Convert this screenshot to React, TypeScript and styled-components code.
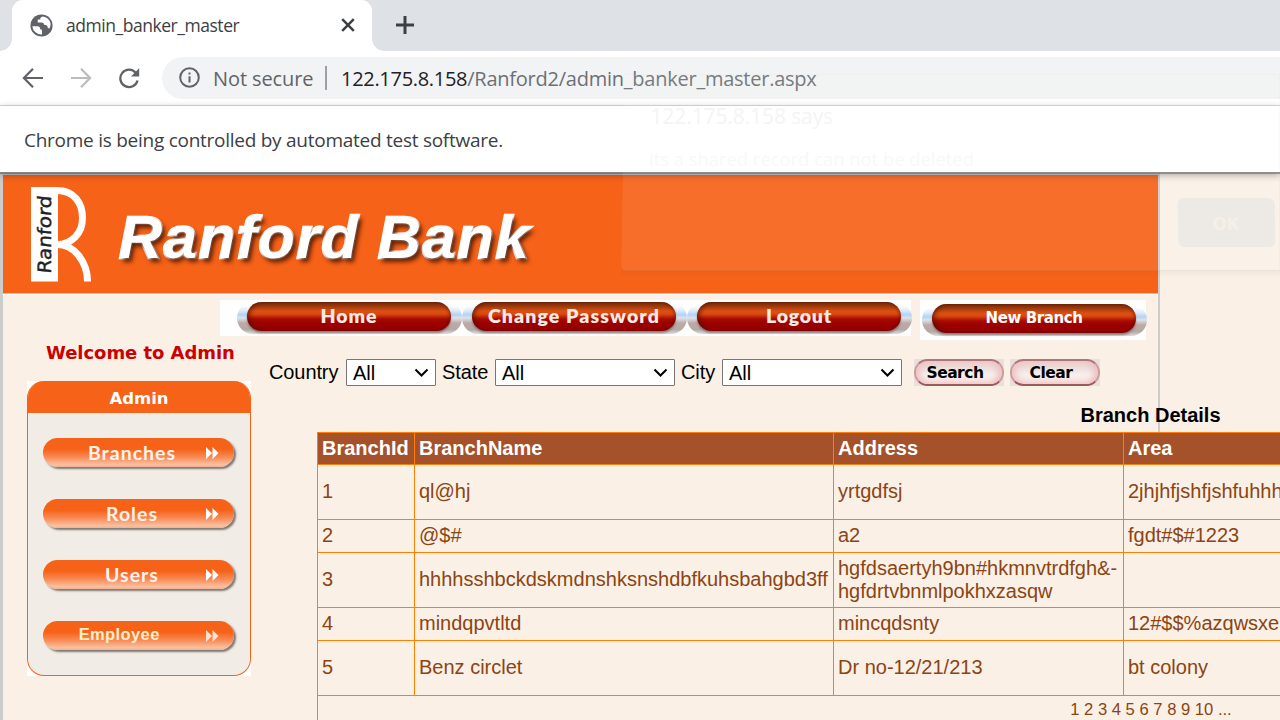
import React from "react";
import styled, { createGlobalStyle } from "styled-components";

const Global = createGlobalStyle`
  * { box-sizing: border-box; }
  html, body { margin: 0; padding: 0; }
  body { width: 1280px; height: 720px; overflow: hidden; background: #faf0e6; }
`;

const orange = "#f66218";
const linen = "#faf0e6";
const uiFont = `"Open Sans", "Noto Sans", sans-serif`;
const arial = `"Liberation Sans", Arial, sans-serif`;

const Window = styled.div`
  position: relative;
  width: 1280px;
  height: 720px;
  overflow: hidden;
  display: flex;
  flex-direction: column;
  background: ${linen};
  font-family: ${arial};
`;

const Label = styled.span<{ $size: number; $color?: string; $track?: number; $weight?: number; $font?: string }>`
  font-family: ${(p) => p.$font ?? uiFont};
  font-size: ${(p) => p.$size}px;
  color: ${(p) => p.$color ?? "#3c4043"};
  letter-spacing: ${(p) => p.$track ?? 0}px;
  font-weight: ${(p) => p.$weight ?? 400};
  white-space: nowrap;
`;

/* Browser chrome */
const TabStrip = styled.div`
  flex: none;
  height: 51px;
  padding-left: 12px;
  display: flex;
  background: #dee1e6;
`;

const Tab = styled.div`
  position: relative;
  width: 360px;
  height: 51px;
  padding: 0 17px 1px 18px;
  display: flex;
  align-items: center;
  background: #fff;
  border-radius: 11px 11px 0 0;
  &::before, &::after {
    content: "";
    position: absolute;
    bottom: 0;
    width: 12px;
    height: 12px;
  }
  &::before { left: -12px; background: radial-gradient(circle at 0 0, transparent 11.5px, #fff 12px); }
  &::after { right: -12px; background: radial-gradient(circle at 100% 0, transparent 11.5px, #fff 12px); }
`;

const TabTitle = styled.div`
  flex: 1;
  padding-left: 13px;
  display: flex;
`;

const NewTab = styled.div`
  padding: 15px 0 0 23px;
`;

const Toolbar = styled.div`
  flex: none;
  height: 55px;
  padding: 0 0 1px 22px;
  display: flex;
  align-items: center;
  background: #fff;
  border-bottom: 1px solid #dadce0;
`;

const NavIcons = styled.div`
  width: 140px;
  display: flex;
  gap: 26px;
`;

const AddressBar = styled.div`
  flex: 1;
  height: 42px;
  padding-left: 17px;
  display: flex;
  align-items: center;
  background: #f1f3f4;
  border-radius: 21px 0 0 21px;
`;

const AddressDivider = styled.span`
  width: 2px;
  height: 24px;
  margin: 0 14px 0 11px;
  background: #9aa0a6;
`;

const SecureLabel = styled.span`
  width: 101px;
  margin-left: 13px;
  padding-top: 1px;
  display: flex;
`;

const Url = styled.span`
  padding-top: 1px;
  display: flex;
`;

const InfoBar = styled.div`
  flex: none;
  position: relative;
  z-index: 1;
  height: 67px;
  padding: 1px 0 0 24px;
  display: flex;
  align-items: center;
  background: #fff;
  border-bottom: 1px solid #858585;
  box-shadow: 0 1px 0 rgba(90, 90, 90, 0.55), 0 2px 7px rgba(0, 0, 0, 0.35);
`;

/* Bank page */
const Frame = styled.div`
  flex: none;
  width: 1160px;
  height: 620px;
  border: 2px solid #ccc;
  border-left-width: 3px;
  display: flex;
  flex-direction: column;
`;

const Banner = styled.div`
  flex: none;
  height: 119px;
  padding: 12px 0 0 27px;
  display: flex;
  background: ${orange};
  border-bottom: 1px solid #fbb58f;
`;

const BankName = styled.h1`
  margin: 16px 0 0 27px;
  font: italic bold 60px/70px ${arial};
  letter-spacing: 1.5px;
  color: #fff;
  -webkit-text-stroke: 2.4px #fff;
  paint-order: stroke fill;
  stroke-linejoin: round;
  text-shadow: 3px 4px 4px rgba(70, 20, 0, 0.85);
  white-space: nowrap;
`;

const MenuRow = styled.div`
  flex: none;
  height: 46px;
  padding: 5px 0 0 217px;
  display: flex;
  align-items: flex-start;
  gap: 9px;
  border-top: 1px solid #fff;
`;

const MenuStrip = styled.div<{ $h: number; $w: number; $lead: number; $top: number }>`
  width: ${(p) => p.$w}px;
  height: ${(p) => p.$h}px;
  padding: ${(p) => p.$top}px 0 0 ${(p) => p.$lead}px;
  display: flex;
  background: #fefefe;
`;

const PillHalo = styled.div`
  flex: none;
  width: 225px;
  height: 32px;
  padding: 0 11px 3px 10px;
  border-radius: 16px;
  background: linear-gradient(#fff 12%, #dbe9fa 28%, #b3d3f5 40%, #dde2ea 50%, #bfa9a5 66%, #b3aaa7 86%, #e0dcda);
`;

const Pill = styled.div<{ $lift?: number }>`
  width: 204px;
  height: 29px;
  padding-bottom: ${(p) => p.$lift ?? 2}px;
  display: flex;
  align-items: center;
  justify-content: center;
  border-radius: 15px;
  background: linear-gradient(#7d2f0c 0%, #9c3a0c 14%, #df4f12 32%, #d9480f 42%, #a80c02 58%, #9c0000 72%, #990000 100%);
  box-shadow: inset 3px 0 4px rgba(80, 15, 0, 0.6), inset -2px 0 3px rgba(80, 15, 0, 0.35), 0 2px 2px rgba(90, 60, 60, 0.5);
`;

const Columns = styled.div`
  display: flex;
  align-items: flex-start;
`;

const Sidebar = styled.div`
  flex: none;
  width: 248px;
  padding-left: 24px;
`;

const Welcome = styled.div`
  height: 41px;
  padding: 1px 0 0 19px;
  line-height: 24px;
`;

const PanelBack = styled.div`
  width: 224px;
  height: 295px;
  background: #fff;
`;

const Panel = styled.div`
  height: 100%;
  overflow: hidden;
  border: 1.5px solid ${orange};
  border-top: 0;
  border-radius: 17px;
  background: #f1ede6;
`;

const PanelTitle = styled.div`
  height: 32px;
  padding-top: 2px;
  display: flex;
  align-items: center;
  justify-content: center;
  background: ${orange};
`;

const PanelList = styled.div`
  padding: 25px 0 0 15px;
  display: flex;
  flex-direction: column;
  gap: 32px;
`;

const SideButton = styled.div`
  width: 191px;
  height: 29px;
  padding: 0 15px 0 0;
  display: flex;
  align-items: center;
  border-radius: 14.5px;
  background: linear-gradient(#f2641c 0%, ${orange} 12%, ${orange} 38%, #f88a55 66%, #fbc0a0 92%, #eeb294 100%);
  box-shadow: 2px 2px 2px #7f7873;
`;

const SideText = styled.span<{ $shift: number; $lift: number }>`
  flex: 1;
  padding: 0 0 ${(p) => p.$lift}px ${(p) => p.$shift}px;
  display: flex;
  justify-content: center;
`;

const Content = styled.div`
  flex: none;
  padding: 19px 0 0 18px;
`;

const Filters = styled.div`
  height: 27px;
  display: flex;
  align-items: center;
`;

const FilterName = styled.label<{ $w: number }>`
  width: ${(p) => p.$w}px;
  font-size: 20px;
  letter-spacing: -0.1px;
  color: #000;
`;

const Select = styled.div<{ $w: number }>`
  width: ${(p) => p.$w}px;
  height: 27px;
  margin-right: 6px;
  padding: 1px 6px 0 6px;
  display: flex;
  align-items: center;
  justify-content: space-between;
  background: #fff;
  border: 1px solid #767676;
  border-radius: 1px;
  font-size: 20px;
  color: #000;
`;

const Glossy = styled.div<{ $ml: number }>`
  width: 90px;
  height: 27px;
  margin-left: ${(p) => p.$ml}px;
  background: #ecdede;
`;

const GlossyInner = styled.div`
  height: 27px;
  padding: 0 8px 0 0;
  display: flex;
  align-items: center;
  justify-content: center;
  border: 2px solid #cc9c9e;
  border-top-color: #a8787a;
  border-bottom-color: #9a5a5c;
  border-radius: 14px;
  background: linear-gradient(#f0d3d2, #ecdcd9 25%, #f6efec 60%, #f8e9e6);
  box-shadow: inset 4px 0 6px #f3c3c5, inset -4px 0 6px #efbfc1;
`;

const Table = styled.table`
  width: 1667px;
  margin: 17px 0 0 48px;
  border-collapse: collapse;
  table-layout: fixed;
  font-size: 20px;
  color: #8b4513;
`;

const Caption = styled.caption`
  height: 29px;
  padding: 1px 1px 0 0;
  font-weight: bold;
  line-height: 23px;
  color: #000;
`;

const Row = styled.tr<{ $h: number }>`
  height: ${(p) => p.$h}px;
`;

const Head = styled.th`
  padding: 0 4px;
  border: 1px solid #ff8000;
  background: #a55129;
  color: #fff;
  text-align: left;
  line-height: 23px;
`;

const Cell = styled.td<{ $tall?: boolean }>`
  padding: 0 4px ${(p) => (p.$tall ? 0 : 2)}px;
  border: 1px solid #ff8000;
  background: ${linen};
  line-height: 23px;
  white-space: nowrap;
`;

const PagerCell = styled(Cell)`
  padding-top: 2px;
  text-align: center;
  vertical-align: top;
  font-size: 16.6px;
`;

/* Fading alert dialog above the page */
const Ghost = styled.div`
  position: absolute;
  z-index: 3;
  left: 621px;
  top: 74px;
  width: 659px;
  height: 197px;
  padding: 28px 0 0 28px;
  background: rgba(255, 255, 255, 0.08);
  clip-path: polygon(4px 0, 100% 0, 100% 100%, 3px 100%, 0 192px, 2px 96px);
  box-shadow: inset 0 0 0 1px rgba(120, 110, 100, 0.03);
`;

const GhostLine = styled.div<{ $ml: number; $h: number }>`
  height: ${(p) => p.$h}px;
  margin-left: ${(p) => p.$ml}px;
`;

const GhostShade = styled.div`
  position: absolute;
  z-index: 2;
  left: 621px;
  top: 270px;
  width: 659px;
  height: 8px;
  background: linear-gradient(rgba(120, 60, 20, 0.06), transparent);
`;

const GhostOk = styled.div`
  width: 97px;
  height: 49px;
  margin: 9px 0 0 529px;
  padding-right: 2px;
  display: flex;
  align-items: center;
  justify-content: center;
  border-radius: 6px;
  background: #edeae6;
  transform: skewX(1deg);
`;

const Globe = () => (
  <svg width="23" height="23" viewBox="0 0 22 22">
    <circle cx="11" cy="11" r="10.6" fill="#5f6368" />
    <path d="M2.2 11.6h4.6c2.2 0 3 1.2 3 3 1.4 0 1.7.7 1.7 2.4v2.6A8.8 8.8 0 0 1 2.2 11.6z" fill="#fff" />
    <path d="M12.2 2.4c-2 .6-2.6 1.7-2.4 2.8H7.4v2.9h3.6c1.9 0 2.4 1 2.4 2.2 2.4 0 3.6 1 3.6 3.2l1.6.3a8.6 8.6 0 0 0 1.1-4.6A8.9 8.9 0 0 0 12.2 2.4z" fill="#fff" />
  </svg>
);

const Stroke = ({ d, size = 22, color = "#5f6368", width = 2.2 }: { d: string; size?: number; color?: string; width?: number }) => (
  <svg width={size} height={size} viewBox={`0 0 ${size} ${size}`} fill="none" stroke={color} strokeWidth={width}>
    <path d={d} />
  </svg>
);

const Reload = () => (
  <svg width="24" height="22" viewBox="0 0 24 22" fill="none">
    <path d="M17.9 6A8.7 8.7 0 1 0 19.5 13.4" stroke="#5f6368" strokeWidth="2.3" />
    <path d="M21.2 1.2v8.2h-8.2z" fill="#5f6368" />
  </svg>
);

const Info = () => (
  <svg width="21" height="21" viewBox="0 0 21 21">
    <circle cx="10.5" cy="10.5" r="9.3" fill="none" stroke="#5f6368" strokeWidth="2" />
    <path d="M9.5 5.4h2v2.1h-2zM9.5 9.2h2v6.3h-2z" fill="#5f6368" />
  </svg>
);

const Chevron = () => (
  <svg width="15" height="10" viewBox="0 0 15 10" fill="none" stroke="#000" strokeWidth="2">
    <path d="M1.500 1.500l6 6 6-6" />
  </svg>
);

const FastForward = ({ color }: { color: string }) => (
  <svg width="14" height="12" viewBox="0 0 14 12" fill={color}>
    <path d="M1 0l6 6-6 6zM7.500 0l6 6-6 6z" />
  </svg>
);

const Logo = () => (
  <svg width="62" height="95" viewBox="0 0 62 95">
    <rect x="1" y="0" width="27" height="94.500" fill="#fff" />
    <path d="M27 3.500C44 3.500 52.500 16 52.500 31S42 57.500 27 57.500C44 57 57.500 75 57.500 94.500" fill="none" stroke="#fff" strokeWidth="7" />
    <text transform="translate(20.800 87) rotate(-90) skewX(-6)" fontFamily="DejaVu Sans, sans-serif" fontSize="18.500" textLength="78" lengthAdjust="spacingAndGlyphs" fill="#222" stroke="#222" strokeWidth="0.400">Ranford</text>
  </svg>
);

const columns = [
  { name: "BranchId", width: 97 },
  { name: "BranchName", width: 419 },
  { name: "Address", width: 290 },
  { name: "Area", width: 861 },
];

const rows = [
  { h: 55, cells: ["1", "ql@hj", "yrtgdfsj", "2jhjhfjshfjshfuhhh"] },
  { h: 33, cells: ["2", "@$#", "a2", "fgdt#$#1223"] },
  { h: 55, cells: ["3", "hhhhsshbckdskmdnshksnshdbfkuhsbahgbd3ff", "hgfdsaertyh9bn#hkmnvtrdfgh&-\nhgfdrtvbnmlpokhxzasqw", ""] },
  { h: 33, cells: ["4", "mindqpvtltd", "mincqdsnty", "12#$$%azqwsxe"] },
  { h: 55, cells: ["5", "Benz circlet", "Dr no-12/21/213", "bt colony"] },
];

const menu = [
  { text: "Home", track: 0.9 },
  { text: "Change Password", track: 1.1 },
  { text: "Logout", track: 0.8 },
];

const side = ["Branches", "Roles", "Users", "Employee"];

export default function App() {
  return (
    <Window>
      <Global />
      <TabStrip>
        <Tab>
          <Globe />
          <TabTitle>
            <Label $size={17.5} $track={-0.46}>admin_banker_master</Label>
          </TabTitle>
          <Stroke size={14} color="#3c4043" width={2.5} d="M1.200 1.200l11.600 11.600M12.800 1.200L1.200 12.800" />
        </Tab>
        <NewTab>
          <Stroke size={20} color="#3c4043" width={3} d="M10 1v18M1 10h18" />
        </NewTab>
      </TabStrip>
      <Toolbar>
        <NavIcons>
          <Stroke d="M21 11H2.500M11 1.800L1.900 11l9.100 9.200" />
          <Stroke color="#babcbe" d="M1 11h18.500M11 1.800l9.100 9.200-9.100 9.200" />
          <Reload />
        </NavIcons>
        <AddressBar>
          <Info />
          <SecureLabel>
            <Label $size={20} $track={-0.1} $color="#5f6368">Not secure</Label>
          </SecureLabel>
          <AddressDivider />
          <Url>
            <Label $size={20} $track={-0.3} $color="#202124">122.175.8.158</Label>
            <Label $size={20} $track={-0.24} $color="#6c7074">/Ranford2/admin_banker_master.aspx</Label>
          </Url>
        </AddressBar>
      </Toolbar>
      <InfoBar>
        <Label $size={19} $track={-0.26}>Chrome is being controlled by automated test software.</Label>
      </InfoBar>

      <Frame>
        <Banner>
          <Logo />
          <BankName>Ranford Bank</BankName>
        </Banner>
        <MenuRow>
          <MenuStrip $w={691} $h={36} $lead={17} $top={2}>
            {menu.map((m) => (
              <PillHalo key={m.text}>
                <Pill>
                  <Label $size={19.5} $color="#f7e9e4" $weight={800} $track={m.track} $font='"Lato", sans-serif'>{m.text}</Label>
                </Pill>
              </PillHalo>
            ))}
          </MenuStrip>
          <MenuStrip $w={226} $h={40} $lead={2} $top={4}>
            <PillHalo>
              <Pill $lift={1}>
                <Label $size={15} $color="#fff" $weight={700} $track={-0.4} $font='"DejaVu Sans", sans-serif'>New Branch</Label>
              </Pill>
            </PillHalo>
          </MenuStrip>
        </MenuRow>
        <Columns>
          <Sidebar>
            <Welcome>
              <Label $size={18} $track={-0.05} $color="#cc0000" $weight={700} $font='"DejaVu Sans", sans-serif'>Welcome to Admin</Label>
            </Welcome>
            <PanelBack>
              <Panel>
                <PanelTitle>
                  <Label $size={16.5} $color="#fff" $weight={700} $font='"DejaVu Sans", sans-serif'>Admin</Label>
                </PanelTitle>
                <PanelList>
                  {side.map((s) => (
                    <SideButton key={s}>
                      <SideText $shift={s === "Employee" ? 0 : 16} $lift={s === "Employee" ? 3 : 0}>
                        {s === "Employee" ? (
                          <Label $size={16.5} $color="#fdeec8" $track={0.4} $weight={700} $font={arial}>{"Employee\u2007"}</Label>
                        ) : (
                          <Label $size={19.5} $color="#fff3ec" $weight={700} $track={1} $font='"Lato", sans-serif'>{s}</Label>
                        )}
                      </SideText>
                      <FastForward color={s === "Employee" ? "#fde3cf" : "#fff"} />
                    </SideButton>
                  ))}
                </PanelList>
              </Panel>
            </PanelBack>
          </Sidebar>
          <Content>
            <Filters>
              <FilterName $w={77}>Country</FilterName>
              <Select $w={90}>All<Chevron /></Select>
              <FilterName $w={53}>State</FilterName>
              <Select $w={180}>All<Chevron /></Select>
              <FilterName $w={41}>City</FilterName>
              <Select $w={180}>All<Chevron /></Select>
              <Glossy $ml={6}>
                <GlossyInner>
                  <Label $size={15.5} $color="#000" $weight={700} $font='"DejaVu Sans", sans-serif' $track={-0.5}>Search</Label>
                </GlossyInner>
              </Glossy>
              <Glossy $ml={6}>
                <GlossyInner>
                  <Label $size={15.5} $color="#000" $weight={700} $font='"DejaVu Sans", sans-serif' $track={-0.5}>Clear</Label>
                </GlossyInner>
              </Glossy>
            </Filters>
            <Table>
              <Caption>Branch Details</Caption>
              <colgroup>
                {columns.map((c) => <col key={c.name} width={c.width} />)}
              </colgroup>
              <thead>
                <Row $h={32}>
                  {columns.map((c) => <Head key={c.name}>{c.name}</Head>)}
                </Row>
              </thead>
              <tbody>
                {rows.map((r) => (
                  <Row key={r.cells[0]} $h={r.h}>
                    {r.cells.map((c, i) => (
                      <Cell key={i} $tall={c.includes("\n")}>
                        {c.split("\n").map((line) => <div key={line}>{line}</div>)}
                      </Cell>
                    ))}
                  </Row>
                ))}
                <Row $h={40}>
                  <PagerCell colSpan={4}>1 2 3 4 5 6 7 8 9 10 ...</PagerCell>
                </Row>
              </tbody>
            </Table>
          </Content>
        </Columns>
      </Frame>

      <GhostShade />
      <Ghost>
        <GhostLine $ml={1.5} $h={44}>
          <Label $size={21} $track={-0.1} $color="#f3f4f5">122.175.8.158 says</Label>
        </GhostLine>
        <GhostLine $ml={0} $h={43}>
          <Label $size={18.4} $color="#f8f8f8">its a shared record can not be deleted</Label>
        </GhostLine>
        <GhostOk>
          <Label $size={18} $color="#f7efe6" $weight={700}>OK</Label>
        </GhostOk>
      </Ghost>
    </Window>
  );
}
